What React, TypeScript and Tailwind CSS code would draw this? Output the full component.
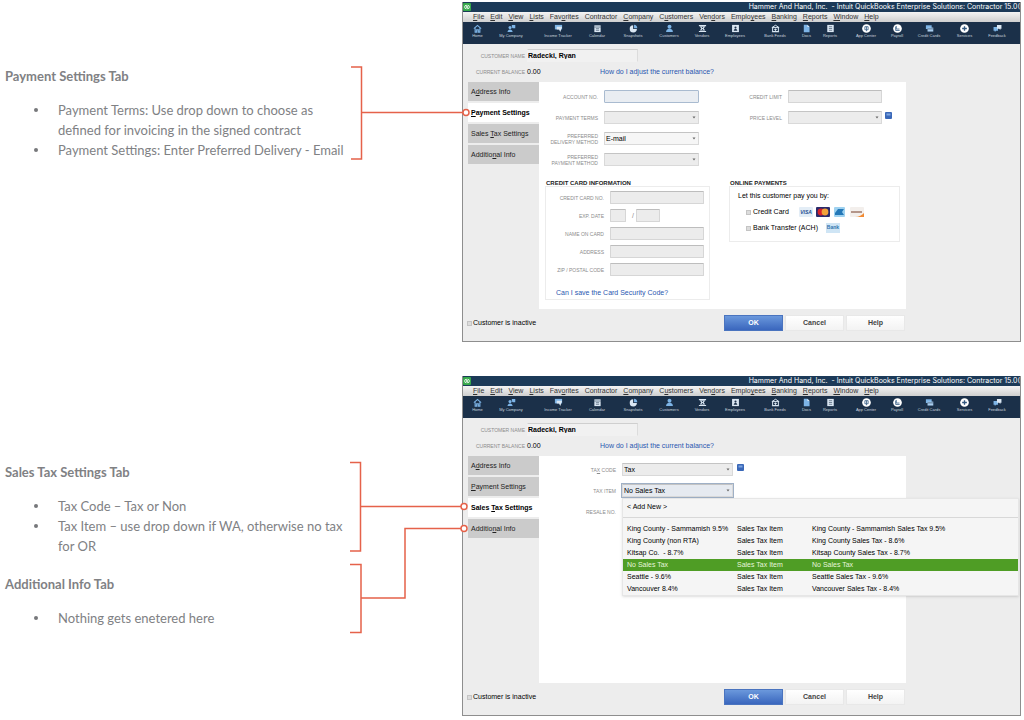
import type { ReactNode } from "react";

const menus = [
  "&File", "&Edit", "&View", "&Lists", "Fav&orites", "Contractor", "&Company",
  "C&ustomers", "Ven&dors", "Emplo&yees", "&Banking", "&Reports", "&Window", "&Help",
];

const tabs = ["A&ddress Info", "&Payment Settings", "Sales &Tax Settings", "Additio&nal Info"];

const taxItems = [
  ["King County - Sammamish 9.5%", "Sales Tax Item", "King County - Sammamish Sales Tax 9.5%"],
  ["King County (non RTA)", "Sales Tax Item", "King County Sales Tax - 8.6%"],
  ["Kitsap Co.  - 8.7%", "Sales Tax Item", "Kitsap County Sales Tax - 8.7%"],
  ["No Sales Tax", "Sales Tax Item", "No Sales Tax"],
  ["Seattle - 9.6%", "Sales Tax Item", "Seattle Sales Tax - 9.6%"],
  ["Vancouver 8.4%", "Sales Tax Item", "Vancouver Sales Tax - 8.4%"],
];

const BLUE = "#7db4e6";
const PALE = "#dbe7f3";
const NAVY = "#1b3049";

// All toolbar icons share a 10x10 grid
const tools: { label: string; icon: ReactNode }[] = [
  {
    label: "Home",
    icon: (
      <g fill="none" stroke={BLUE} strokeWidth="1.3">
        <path d="M1 5.2 5 1.6l4 3.6" />
        <path d="M2.4 4.6V9h1.7V6.4h1.8V9h1.7V4.6" />
      </g>
    ),
  },
  {
    label: "My Company",
    icon: (
      <g fill={BLUE}>
        <circle cx="3.4" cy="4" r="1.7" />
        <path d="M.6 9c0-4 5.6-4 5.6 0z" />
        <path d="M5.4 1h3.8v3.8H6.4L5.4 3.6z" />
      </g>
    ),
  },
  {
    label: "Income Tracker",
    icon: (
      <g>
        <path fill={BLUE} d="M1 1h8v5H1z" />
        <path fill={PALE} d="M3 3h6L7 9 5.6 6H3z" />
      </g>
    ),
  },
  {
    label: "Calendar",
    icon: (
      <g>
        <path fill={PALE} d="M1.5 1.5h7V9h-7z" />
        <path stroke={NAVY} strokeWidth=".6" d="M1.5 3.4h7M3.2 5.2h3.6M3.2 7h3.6" />
      </g>
    ),
  },
  {
    label: "Snapshots",
    icon: (
      <g>
        <path fill={PALE} d="M4.6 1.4v4.2h4.2A4 4 0 1 1 4.6 1.4z" />
        <path fill={BLUE} d="M5.6.8A4 4 0 0 1 9.2 4.6H5.6z" />
      </g>
    ),
  },
  {
    label: "Customers",
    icon: (
      <g fill={BLUE}>
        <circle cx="5" cy="3" r="2.2" />
        <path d="M1.2 9c0-4.800 7.600-4.800 7.600 0z" />
      </g>
    ),
  },
  {
    label: "Vendors",
    icon: (
      <g fill={PALE}>
        <path d="M1 1h8v1.4H1zM2 2.8h6L6.4 5 8 7.2H2L3.6 5zM1 7.8h8V9H1z" />
        <path fill={NAVY} d="M4 3.4h2L5 4.6zM4 6.6h2L5 5.4z" />
      </g>
    ),
  },
  {
    label: "Employees",
    icon: (
      <g>
        <path fill={PALE} d="M1.2 1h7.6v8H1.2z" />
        <circle cx="5" cy="4" r="1.2" fill={NAVY} />
        <path fill={NAVY} d="M3 7.4c0-2.4 4-2.4 4 0z" />
      </g>
    ),
  },
  {
    label: "Bank Feeds",
    icon: (
      <g fill="none" stroke={PALE} strokeWidth="1.1">
        <path d="M1 4 5 1.4 9 4zM1.8 4v4.4h6.4V4M1 8.6h8M5 5v2.6M3.6 6.2h2.8" />
      </g>
    ),
  },
  {
    label: "Docs",
    icon: (
      <g>
        <path fill={BLUE} d="M2 .8h4l2.4 2.4v6H2z" />
        <path fill={PALE} d="M6 .8l2.4 2.4H6z" />
      </g>
    ),
  },
  {
    label: "Reports",
    icon: (
      <g>
        <path fill={PALE} d="M1.4 1h7.2v8H1.4z" />
        <path stroke={NAVY} strokeWidth=".6" d="M3.2 3h3.6M3.2 5h3.6M3.2 7h3.6" />
      </g>
    ),
  },
  {
    label: "App Center",
    icon: (
      <g>
        <circle cx="5" cy="5" r="4.8" fill="#fff" />
        <path fill="none" stroke="#4a6d92" d="M3.2 3h3.6v3.4H3.2zM5 3v5" />
      </g>
    ),
  },
  {
    label: "Payroll",
    icon: (
      <g>
        <circle cx="5" cy="5" r="4.8" fill="#fff" />
        <path fill="none" stroke="#4a6d92" d="M3.6 2.2v3.400h3.600M3 3v4.200h4.400" />
      </g>
    ),
  },
  {
    label: "Credit Cards",
    icon: (
      <g>
        <path fill={BLUE} d="M1 1.4h6.4v4.2H1z" />
        <path fill="#a9cdee" d="M2.8 4h6.4v4.4H2.8z" />
        <path stroke={NAVY} strokeWidth=".6" d="M2.8 5.4h6.4" />
      </g>
    ),
  },
  {
    label: "Services",
    icon: (
      <g>
        <circle cx="5" cy="5" r="4.8" fill="#fff" />
        <path stroke="#33587f" strokeWidth="1.5" d="M5 2.4v5.2M2.4 5h5.2" />
      </g>
    ),
  },
  {
    label: "Feedback",
    icon: (
      <g>
        <path fill={BLUE} d="M.6 3.4h5v4H3.4L2 9V7.4H.6z" />
        <path fill={PALE} d="M4.4 1h5v4.2H8.2v1.4L6.8 5.2H4.4z" />
      </g>
    ),
  },
];

// "&" marks the access key, as in a Windows resource file
const Mnemonic = ({ text }: { text: string }) => {
  const at = text.indexOf("&");
  if (at < 0) return <>{text}</>;
  return (
    <>
      {text.slice(0, at)}
      <span className="underline">{text[at + 1]}</span>
      {text.slice(at + 2)}
    </>
  );
};

const Note = ({ title, items }: { title: string; items: string[] }) => (
  <div>
    <h2 className="font-bold">{title}</h2>
    <ul className="mt-3.5">
      {items.map((item) => (
        <li key={item} className="flex">
          <span className="ml-[29px] mr-5 mt-2 h-1 w-1 shrink-0 rounded-full bg-[#77787b]" />
          <span>{item}</span>
        </li>
      ))}
    </ul>
  </div>
);

type FieldProps = {
  id: string;
  label: ReactNode;
  labelWidth: string;
  children: ReactNode;
};

const Field = ({ id, label, labelWidth, children }: FieldProps) => (
  <div className="flex items-center gap-1.5">
    <label htmlFor={id} className={`shrink-0 text-right text-[5px] leading-[6px] text-[#8c8c8c] ${labelWidth}`}>
      {label}
    </label>
    {children}
  </div>
);

const TextBox = ({ id, className = "w-[94px]" }: { id: string; className?: string }) => (
  <input
    id={id}
    type="text"
    className={`h-[13px] rounded-[1px] border border-[#d6d6d6] border-t-[#bdbdbd] bg-[#ececec] px-0.5 text-[7px] ${className}`}
  />
);

const DropDown = ({ id, value = "", className }: { id: string; value?: string; className: string }) => (
  <div className={`relative h-[13px] ${className}`}>
    <select
      id={id}
      defaultValue={value}
      className="block h-full w-full appearance-none rounded-[1px] border border-[#d9d9d9] border-t-[#c4c4c4] bg-transparent px-px text-[7px] leading-[11px] text-black"
    >
      <option value={value}>{value}</option>
    </select>
    <svg viewBox="0 0 4 3" className="pointer-events-none absolute right-[3px] top-[5px] h-[3px] w-1">
      <path d="M.5.5h3L2 2.500z" fill="#666" />
    </svg>
  </div>
);

const HelpIcon = () => (
  <svg viewBox="0 0 7 7" className="mb-1 h-[7px] w-[7px] shrink-0">
    <rect width="7" height="7" rx="1" fill="#3a68b8" />
    <path d="M1.5 1.5h4v2h-4z" fill="#7fa5e0" />
  </svg>
);

const ToolBar = () => (
  <div className="grid h-[22px] grid-cols-[17fr_50fr_44fr_34fr_38fr_34fr_32fr_34fr_46fr_17fr_30fr_42fr_20fr_44fr_27fr_38fr] bg-[#1b3049] pl-1.5 pr-1 pt-0.5">
    {tools.map((tool) => (
      <button key={tool.label} type="button" className="flex min-w-0 flex-col items-center">
        <svg viewBox="0 0 10 10" className="h-[9px] w-[9px] shrink-0">{tool.icon}</svg>
        <span className="whitespace-nowrap text-[4px] leading-[6px] text-[#c9d3de]">{tool.label}</span>
      </button>
    ))}
  </div>
);

const CheckBox = () => (
  <input type="checkbox" className="h-[5px] w-[5px] shrink-0 appearance-none border border-[#c4c4c4] bg-[#dcdcdc]" />
);

type WindowProps = { id: string; activeTab: number; children: ReactNode };

const CustomerWindow = ({ id, activeTab, children }: WindowProps) => (
  <div className="min-w-0 flex-1 border border-t-0 border-[#8e8e8e] bg-[#ededed] font-['Liberation_Sans',Arial,sans-serif] text-[7px] leading-[10px] text-[#222]">
    <div className="flex h-2.5 items-center justify-between overflow-hidden bg-[#1c3a58] text-white">
      <svg viewBox="0 0 8 8" className="h-2 w-2 shrink-0">
        <rect width="8" height="8" rx="1" fill="#35a84a" />
        <path d="M3.4 2.2a1.8 1.8 0 1 0 0 3.6M4.6 2.2a1.8 1.8 0 1 1 0 3.6M3.4 2.2v3M4.6 2.8v3" fill="none" stroke="#fff" strokeWidth=".8" />
      </svg>
      <span className="whitespace-pre font-[Inter,sans-serif]">Hammer And Hand, Inc.  - Intuit QuickBooks Enterprise Solutions: Contractor 15.0(</span>
    </div>
    <nav className="flex h-2.5 items-center gap-1.5 bg-gradient-to-b from-[#f4f4f4] to-[#cfcfcf] pl-2.5 text-[#333]">
      {menus.map((menu) => (
        <button key={menu} type="button">
          <Mnemonic text={menu} />
        </button>
      ))}
    </nav>
    <ToolBar />

    <div className="flex flex-col gap-[3px] pb-1 pt-[5px]">
      <div className="flex items-center gap-0.5">
        <label htmlFor={`${id}-name`} className="w-[62px] text-right text-[5px] text-[#8c8c8c]">CUSTOMER NAME</label>
        <input
          id={`${id}-name`}
          type="text"
          defaultValue="Radecki, Ryan"
          className="h-[13px] w-[111px] border border-transparent border-r-[#dcdcdc] border-t-[#cfcfcf] bg-[#f1f1f1] text-[7px] font-bold text-black"
        />
      </div>
      <div className="flex h-[13px] items-center gap-0.5">
        <span className="w-[62px] text-right text-[5px] text-[#8c8c8c]">CURRENT BALANCE</span>
        <span className="w-[71px] text-black">0.00</span>
        <a href="#balance" className="text-[#2a57b0]">How do I adjust the current balance?</a>
      </div>
    </div>

    <div className="flex pl-[5px]">
      <div className="flex w-[71px] shrink-0 flex-col gap-0.5">
        {tabs.map((tab, i) => (
          <button
            key={tab}
            type="button"
            className={`h-[19px] pl-[3px] text-left ${i === activeTab ? "bg-white font-bold text-black" : "bg-[#cbcbcb]"}`}
          >
            <Mnemonic text={tab} />
          </button>
        ))}
      </div>
      <div className="mr-[114px] min-h-[227px] min-w-0 flex-1 bg-white">{children}</div>
    </div>

    <div className="flex items-center justify-between pb-2.5 pl-1 pr-[115px] pt-1.5">
      <label className="flex items-center gap-px text-black">
        <CheckBox />
        Customer is inactive
      </label>
      <div className="flex gap-0.5 font-bold text-[#444]">
        <button type="button" className="h-4 w-[59px] border border-[#4a74bf] bg-gradient-to-b from-[#6b98dc] to-[#3a66bd] text-white">OK</button>
        <button type="button" className="h-4 w-[59px] border border-[#e8e8e8] bg-gradient-to-b from-white to-[#f3f3f3]">Cancel</button>
        <button type="button" className="h-4 w-[59px] border border-[#e8e8e8] bg-gradient-to-b from-white to-[#f3f3f3]">Help</button>
      </div>
    </div>
  </div>
);

const CardLogos = () => (
  <span className="ml-2 flex gap-[3px]">
    <svg viewBox="0 0 14 10" className="h-2.5 w-3.5">
      <rect width="14" height="10" rx="1" fill="#e3edf6" />
      <text x="7" y="7" textAnchor="middle" fontSize="5" fontWeight="bold" fontStyle="italic" fill="#1d4f91">VISA</text>
    </svg>
    <svg viewBox="0 0 14 10" className="h-2.5 w-3.5">
      <rect width="14" height="10" rx="1" fill="#2b2a6b" />
      <circle cx="5" cy="5" r="3.4" fill="#d8232a" />
      <circle cx="9" cy="5" r="3.4" fill="#f2a33a" />
    </svg>
    <svg viewBox="0 0 14 10" className="h-2.5 w-3.5">
      <rect x="1" width="11" height="10" rx="1" fill="#9fd2f0" />
      <path d="M2 8V6l3-4h6l-2 3 2 3z" fill="#2478b8" />
    </svg>
    <svg viewBox="0 0 14 10" className="h-2.5 w-3.5">
      <rect width="14" height="10" rx="1" fill="#f3efec" />
      <path d="M1 5h11" stroke="#8a5a4a" strokeWidth="1.2" />
      <path d="M5 10c4 0 7-2 9-4v4z" fill="#f28a32" />
    </svg>
  </span>
);

const PaymentSettings = () => (
  <div className="pb-2 pt-2">
    <div className="flex items-start gap-12">
      <div className="flex flex-col gap-2">
        <Field id="account" label="ACCOUNT NO." labelWidth="w-[59px]">
          <input id="account" type="text" className="h-[13px] w-[95px] rounded-[1px] border border-[#a9bbd0] bg-[#e9edf2] px-0.5 text-[7px]" />
        </Field>
        <Field id="terms" label="PAYMENT TERMS" labelWidth="w-[59px]">
          <DropDown id="terms" className="w-[95px] bg-[#ececec]" />
        </Field>
        <Field id="delivery" label={<>PREFERRED<br />DELIVERY METHOD</>} labelWidth="w-[59px]">
          <DropDown id="delivery" value="E-mail" className="w-[95px] bg-[#f6f6f6]" />
        </Field>
        <Field id="method" label={<>PREFERRED<br />PAYMENT METHOD</>} labelWidth="w-[59px]">
          <DropDown id="method" className="w-[95px] bg-[#ececec]" />
        </Field>
      </div>
      <div className="flex flex-col gap-2">
        <Field id="limit" label="CREDIT LIMIT" labelWidth="w-[35px]">
          <TextBox id="limit" />
        </Field>
        <div className="flex items-center gap-[3px]">
          <Field id="level" label="PRICE LEVEL" labelWidth="w-[35px]">
            <DropDown id="level" className="w-[94px] bg-[#ececec]" />
          </Field>
          <HelpIcon />
        </div>
      </div>
    </div>

    <div className="mt-3 flex items-start gap-[19px] pl-1.5">
      <section>
        <h3 className="h-2 pl-px text-[6px] font-bold leading-[10px]">CREDIT CARD INFORMATION</h3>
        <div className="w-[165px] border border-[#ececec] pb-px pt-1">
          <div className="flex flex-col gap-[5px]">
            <Field id="card" label="CREDIT CARD NO." labelWidth="w-[58px]">
              <TextBox id="card" />
            </Field>
            <Field id="month" label="EXP. DATE" labelWidth="w-[58px]">
              <TextBox id="month" className="w-4" />
              <span className="text-[#8c8c8c]">/</span>
              <input
                aria-label="Expiry year"
                type="text"
                className="-ml-1 h-[13px] w-6 rounded-[1px] border border-[#d6d6d6] border-t-[#bdbdbd] bg-[#ececec]"
              />
            </Field>
            <Field id="holder" label="NAME ON CARD" labelWidth="w-[58px]">
              <TextBox id="holder" />
            </Field>
            <Field id="address" label="ADDRESS" labelWidth="w-[58px]">
              <TextBox id="address" />
            </Field>
            <Field id="zip" label="ZIP / POSTAL CODE" labelWidth="w-[58px]">
              <TextBox id="zip" />
            </Field>
          </div>
          <a href="#security" className="ml-2.5 mt-3 block text-[#2a57b0]">Can I save the Card Security Code?</a>
        </div>
      </section>
      <section>
        <h3 className="h-2 pl-px text-[6px] font-bold leading-[10px]">ONLINE PAYMENTS</h3>
        <div className="w-[171px] border border-[#ececec] pb-2 pl-2 pt-1 text-black">
          <p>Let this customer pay you by:</p>
          <div className="ml-2 mt-1.5 flex flex-col gap-1.5">
            <label className="flex h-2.5 items-center gap-0.5">
              <CheckBox />
              Credit Card
              <CardLogos />
            </label>
            <label className="flex h-2.5 items-center gap-0.5">
              <CheckBox />
              Bank Transfer (ACH)
              <span className="ml-1.5 h-2.5 w-3.5 bg-[#cfe5f5] text-center text-[5px] font-bold leading-[8px] text-[#2f74ad]">Bank</span>
            </label>
          </div>
        </div>
      </section>
    </div>
  </div>
);

const SalesTaxSettings = () => (
  <div className="flex flex-col gap-2 pt-[7px]">
    <div className="flex items-center gap-1">
      <Field id="tax-code" label={<Mnemonic text="TA&X CODE" />} labelWidth="w-[77px]">
        <DropDown id="tax-code" value="Tax" className="w-[111px] bg-[#ececec]" />
      </Field>
      <HelpIcon />
    </div>
    <div className="relative">
      <Field id="tax-item" label="TAX ITEM" labelWidth="w-[77px]">
        <DropDown id="tax-item" value="No Sales Tax" className="w-[111px] bg-[#e6eaf0] outline outline-[#9fb0c6]" />
      </Field>
      <div className="absolute left-[83px] top-[14px] z-10 w-[397px] border border-[#e6e6e6] bg-[#f5f5f5] text-black shadow-sm">
        <button type="button" className="block h-[19px] w-full border-b border-[#d8d8d8] pb-0.5 pl-1 text-left">&lt; Add New &gt;</button>
        <table className="mt-[5px] w-full table-fixed">
          <colgroup>
            <col className="w-[114px]" />
            <col className="w-[75px]" />
            <col />
          </colgroup>
          <tbody>
            {taxItems.map((row, i) => (
              <tr key={row[0]} className={i === 3 ? "h-3 bg-[#4f9d25] text-[#e6f5dc]" : "h-3"}>
                {row.map((cell, c) => (
                  <td key={c} className={c === 0 ? "whitespace-pre pl-1" : "whitespace-pre"}>{cell}</td>
                ))}
              </tr>
            ))}
          </tbody>
        </table>
      </div>
    </div>
    {/* the open list covers this box */}
    <Field id="resale" label="RESALE NO." labelWidth="w-[77px]">
      <TextBox id="resale" />
    </Field>
  </div>
);

const App = () => (
  <main className="flex flex-col gap-[34px] bg-white pr-[3px] pt-0.5">
    <div className="flex items-start">
      <div className="w-[350px] shrink-0 pl-[5px] pt-16 font-[Lato,sans-serif] text-[13px] leading-5 text-[#808184]">
        <Note
          title="Payment Settings Tab"
          items={[
            "Payment Terms: Use drop down to choose as defined for invoicing in the signed contract",
            "Payment Settings: Enter Preferred Delivery - Email",
          ]}
        />
      </div>
      <svg viewBox="0 0 112 340" className="relative z-10 h-[340px] w-28 shrink-0 overflow-visible" fill="none" stroke="#e5624a" strokeWidth="1.5">
        <path d="M1 65h10.500v92H1M11.500 110.500H113" />
        <circle cx="116" cy="110.500" r="3" fill="#fff" />
      </svg>
      <CustomerWindow id="payment" activeTab={1}>
        <PaymentSettings />
      </CustomerWindow>
    </div>

    <div className="flex items-start">
      <div className="flex w-[350px] shrink-0 flex-col gap-[18px] pl-[5px] pt-[86px] font-[Lato,sans-serif] text-[13px] leading-5 text-[#808184]">
        <Note
          title="Sales Tax Settings Tab"
          items={["Tax Code – Tax or Non", "Tax Item – use drop down if WA, otherwise no tax for OR"]}
        />
        <Note title="Additional Info Tab" items={["Nothing gets enetered here"]} />
      </div>
      <svg viewBox="0 0 112 340" className="relative z-10 h-[340px] w-28 shrink-0 overflow-visible" fill="none" stroke="#e5624a" strokeWidth="1.5">
        <path d="M0 86.500h10.500v88.500H0M10.500 130.500H111" />
        <path d="M0 188.500h11v68H0M11 222h44V152.500h56" />
        <circle cx="114" cy="130.500" r="3" fill="#fff" />
        <circle cx="114" cy="152.500" r="3" fill="#fff" />
      </svg>
      <CustomerWindow id="tax" activeTab={2}>
        <SalesTaxSettings />
      </CustomerWindow>
    </div>
  </main>
);

export default App;
